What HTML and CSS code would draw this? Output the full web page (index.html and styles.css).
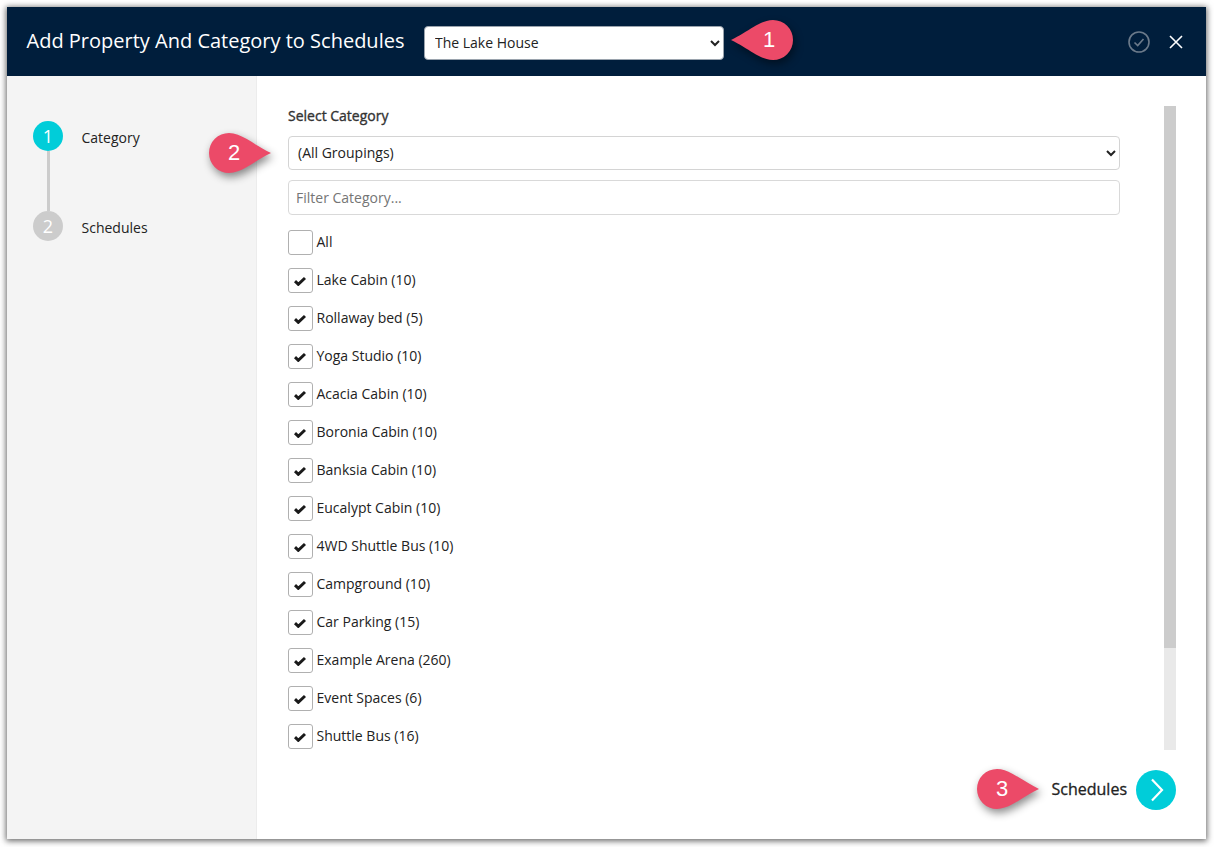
FILE: index.html
```html
<!DOCTYPE html>
<html lang="en">
<head>
<meta charset="utf-8">
<title>Add Property And Category to Schedules</title>
<link rel="stylesheet" href="styles.css">
</head>
<body>
<svg class="defs" width="0" height="0" aria-hidden="true">
  <defs>
    <symbol id="drop" viewBox="0 0 62 40"><path d="M20 0C33 0 45 12 62 20C45 28 33 40 20 40A20 20 0 0 1 20 0Z"/></symbol>
    <symbol id="tick" viewBox="0 0 12 10"><path d="M1 5.2L4.3 8.3L11 2" fill="none" stroke="currentColor" stroke-width="3"/></symbol>
  </defs>
</svg>
<div class="modal">
  <header class="modal-head">
    <h1 class="modal-title">Add Property And Category to Schedules</h1>
    <select class="select select-head"><option>The Lake House</option></select>
    <div class="head-actions">
      <svg class="icon-ok" viewBox="0 0 22 22"><circle cx="11" cy="11" r="10"/><path d="M6.5 11.5L9.7 14.5L15.5 8"/></svg>
      <svg class="icon-close" viewBox="0 0 14 14"><path d="M1 1L13 13M13 1L1 13"/></svg>
    </div>
  </header>
  <div class="modal-body">
    <aside class="steps">
      <div class="step step-active">
        <span class="step-num">1</span><span class="step-label">Category</span>
      </div>
      <div class="step-line"></div>
      <div class="step">
        <span class="step-num">2</span><span class="step-label">Schedules</span>
      </div>
    </aside>
    <main class="content">
      <div class="scroll-wrap">
        <div class="form">
          <label class="field-label">Select Category</label>
          <select class="select select-group"><option>(All Groupings)</option></select>
          <input class="filter" type="text" placeholder="Filter Category...">
          <ul class="list">
            <li class="row"><span class="box"></span><span class="row-text">All</span></li>
            <li class="row"><span class="box"><svg class="tick"><use href="#tick"/></svg></span><span class="row-text">Lake Cabin (10)</span></li>
            <li class="row"><span class="box"><svg class="tick"><use href="#tick"/></svg></span><span class="row-text">Rollaway bed (5)</span></li>
            <li class="row"><span class="box"><svg class="tick"><use href="#tick"/></svg></span><span class="row-text">Yoga Studio (10)</span></li>
            <li class="row"><span class="box"><svg class="tick"><use href="#tick"/></svg></span><span class="row-text">Acacia Cabin (10)</span></li>
            <li class="row"><span class="box"><svg class="tick"><use href="#tick"/></svg></span><span class="row-text">Boronia Cabin (10)</span></li>
            <li class="row"><span class="box"><svg class="tick"><use href="#tick"/></svg></span><span class="row-text">Banksia Cabin (10)</span></li>
            <li class="row"><span class="box"><svg class="tick"><use href="#tick"/></svg></span><span class="row-text">Eucalypt Cabin (10)</span></li>
            <li class="row"><span class="box"><svg class="tick"><use href="#tick"/></svg></span><span class="row-text">4WD Shuttle Bus (10)</span></li>
            <li class="row"><span class="box"><svg class="tick"><use href="#tick"/></svg></span><span class="row-text">Campground (10)</span></li>
            <li class="row"><span class="box"><svg class="tick"><use href="#tick"/></svg></span><span class="row-text">Car Parking (15)</span></li>
            <li class="row"><span class="box"><svg class="tick"><use href="#tick"/></svg></span><span class="row-text">Example Arena (260)</span></li>
            <li class="row"><span class="box"><svg class="tick"><use href="#tick"/></svg></span><span class="row-text">Event Spaces (6)</span></li>
            <li class="row"><span class="box"><svg class="tick"><use href="#tick"/></svg></span><span class="row-text">Shuttle Bus (16)</span></li>
          </ul>
        </div>
        <div class="scrollbar"><div class="scrollbar-thumb"></div></div>
      </div>
      <footer class="content-foot">
        <span class="next-label">Schedules</span>
        <span class="next-btn"><svg viewBox="0 0 14 24"><path d="M2 1.5L12 12L2 22.5"/></svg></span>
      </footer>
    </main>
  </div>
  <div class="callout callout-1"><svg class="drop drop-flip"><use href="#drop"/></svg><span class="callout-num">1</span></div>
  <div class="callout callout-2"><svg class="drop"><use href="#drop"/></svg><span class="callout-num">2</span></div>
  <div class="callout callout-3"><svg class="drop"><use href="#drop"/></svg><span class="callout-num">3</span></div>
</div>
</body>
</html>
```
FILE: styles.css
```css
* { box-sizing: border-box; }
html, body { height: 100%; }
body {
  margin: 0;
  padding: 7px 8px 8px 7px;
  background: #fff;
  font-family: "Open Sans", sans-serif;
  font-size: 14px;
  color: #222;
  overflow: hidden;
}
.defs { position: absolute; }
.modal {
  position: relative;
  height: 832px;
  display: flex;
  flex-direction: column;
  background: #fff;
  box-shadow: 0 1px 6px 1px rgba(0, 0, 0, .6);
}
.modal-head {
  flex: 0 0 69px;
  display: flex;
  align-items: center;
  padding: 0 23px 0 20px;
  background: #001e3c;
}
.modal-title {
  margin: 0 19px 2px -.5px;
  font-size: 20px;
  font-weight: 400;
  color: #fff;
  white-space: nowrap;
}
.select {
  font-family: "Open Sans", sans-serif;
  font-size: 14px;
  color: #222;
  background: #fff;
  border: 1px solid #d4d4d4;
  border-radius: 4px;
  padding: 0 6px;
  outline: 0;
}
.select-head { width: 300px; height: 34px; margin: 3px 0 0 .5px; padding-bottom: 2px; border-color: #9aa3ad; }
.head-actions { margin-left: auto; display: flex; align-items: center; gap: 19px; margin-top: 1px; }
.icon-ok { width: 22px; height: 22px; fill: none; stroke: #6b7a8a; stroke-width: 1.6; }
.icon-close { width: 14px; height: 14px; fill: none; stroke: #fff; stroke-width: 1.6; }
.modal-body { flex: 1; display: flex; min-height: 0; }
.steps {
  flex: 0 0 250px;
  padding: 45px 0 0 26px;
  background: #f4f4f4;
  border-right: 1px solid #ececec;
}
.step { display: flex; align-items: center; height: 30px; }
.step-num {
  flex: 0 0 30px;
  height: 30px;
  border-radius: 50%;
  background: #ccc;
  color: #fff;
  font-size: 18px;
  line-height: 30px;
  text-align: center;
}
.step-active .step-num { background: #00cdd9; }
.step-label { margin: 2px 0 0 18.5px; color: #222; }
.step-line { width: 3px; height: 60px; margin-left: 13.5px; background: #ccc; }
.content {
  flex: 1;
  min-width: 0;
  display: flex;
  flex-direction: column;
  padding: 30px 30px 29px 31px;
}
.scroll-wrap { height: 644px; display: flex; justify-content: space-between; overflow: hidden; }
.scrollbar { flex: 0 0 12px; background: #e9e9e9; }
.scrollbar-thumb { height: 542px; background: #ccc; }
.form { width: 832px; }
.field-label {
  display: block;
  height: 20px;
  margin-bottom: 10px;
  font-weight: 400;
  color: #333;
  line-height: 20px;
  -webkit-text-stroke: .35px #333;
}
.select-group { display: block; width: 100%; height: 34px; margin-bottom: 10px; padding: 0 5px 2px; }
.filter {
  display: block;
  width: 100%;
  height: 35px;
  padding: 0 7px;
  margin-bottom: 15px;
  font-family: "Open Sans", sans-serif;
  font-size: 14px;
  color: #222;
  border: 1px solid #d9d9d9;
  border-radius: 4px;
  outline: 0;
}
.filter::placeholder { color: #757575; opacity: 1; }
.list { list-style: none; margin: 0; padding: 0; display: grid; row-gap: 13px; }
.row { display: flex; align-items: center; height: 25px; gap: 3.5px; color: #222; }
.row-text { margin-bottom: 2px; }
.box {
  flex: 0 0 25px;
  width: 25px;
  height: 25px;
  display: flex;
  align-items: center;
  justify-content: center;
  background: #fff;
  border: 1px solid #b0b0b0;
  border-radius: 3px;
}
.tick { width: 12px; height: 10px; margin-right: 1px; color: #1a1a1a; }
.content-foot { margin-top: 20px; display: flex; align-items: center; justify-content: flex-end; gap: 9px; }
.next-label { margin-bottom: 2px; font-size: 16px; font-weight: 400; color: #222; -webkit-text-stroke: .3px #222; }
.next-btn {
  width: 40px;
  height: 40px;
  border-radius: 50%;
  background: #00cdd9;
  display: flex;
  align-items: center;
  justify-content: center;
}
.next-btn svg { width: 14px; height: 24px; margin-left: 2px; fill: none; stroke: #fff; stroke-width: 2.2; }
.callout { position: absolute; width: 62px; height: 40px; }
.callout-1 { left: 724px; top: 13px; }
.callout-2 { left: 202px; top: 126px; }
.callout-3 { left: 970px; top: 762px; }
.drop { display: block; width: 62px; height: 40px; fill: #ec4a68; filter: drop-shadow(2px 4px 4px rgba(0, 0, 0, .45)); overflow: visible; }
.drop-flip { transform: scaleX(-1); filter: drop-shadow(-2px 4px 4px rgba(0, 0, 0, .45)); }
.callout-num {
  position: absolute;
  top: 0;
  left: 5px;
  width: 40px;
  font-family: "Liberation Sans", sans-serif;
  font-size: 22px;
  line-height: 40px;
  text-align: center;
  color: #fff;
}
.callout-1 .callout-num { left: 18px; }
```
